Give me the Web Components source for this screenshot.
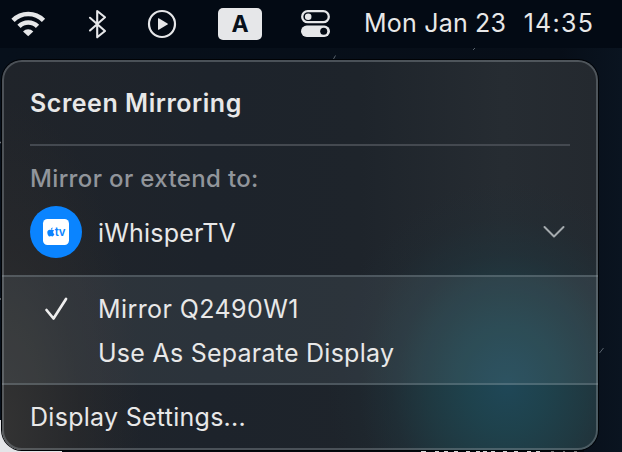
<!DOCTYPE html>
<html lang="en">
<head>
<meta charset="utf-8">
<title>Screen Mirroring</title>
<style>
html,body{margin:0;height:100%;overflow:hidden}
body{font-family:Inter,"Liberation Sans",sans-serif;color:#e8e8e8;background:#050b15}
</style>
</head>
<body>
<mac-desktop>
  <menu-bar slot="bar"></menu-bar>
  <mirror-panel>
    <panel-head slot="head">Screen Mirroring</panel-head>
    <device-group slot="device" name="iWhisperTV">Mirror or extend to:</device-group>
    <mode-option slot="modes" checked style="letter-spacing:.41px">Mirror Q2490W1</mode-option>
    <mode-option slot="modes" style="letter-spacing:.25px">Use As Separate Display</mode-option>
    <panel-link slot="foot">Display Settings...</panel-link>
  </mirror-panel>
</mac-desktop>
<script>
const define = (name, html) => customElements.define(name, class extends HTMLElement {
  constructor() {
    super();
    this.attachShadow({mode: 'open'}).innerHTML = html;
  }
  connectedCallback() {
    const n = this.shadowRoot.querySelector('[data-name]');
    if (n) n.textContent = this.getAttribute('name');
  }
});

define('mac-desktop', `<style>
:host{display:flex;flex-direction:column;position:relative;width:622px;height:452px;overflow:hidden;background:linear-gradient(90deg,#07101b 0,#070e18 90%,#0a1420 100%)}
main{padding:12px 24px 2px 2px;position:relative}
.scene{position:absolute;inset:0}
</style>
<svg class="scene" width="622" height="452" aria-hidden="true">
<rect y="420" width="62" height="32" fill="#e4e5e8"/><rect x="62" y="445" width="522" height="7" fill="#04080e"/>
<path d="M0 142.500H2M0 299H2" stroke="#70757b" stroke-width="1.500"/>
<path d="M333.500 59l2-3.500M473 50l2-2M599.500 353l4-5" stroke="#59636d" stroke-width="1" fill="none"/>
<path d="M421 451.500h5M435 451.500h4M444 451.500h4M454 451.500h4M466 451.500h4M476 451.500h4M483 451.500h4M491 451.500h4M503 451.500h4M514 451.500h4M527 451.500h4M536 451.500h4" stroke="#d8d8d8"/>
<path d="M551 451.500h3M563 451.500h2M574 451.500h3" stroke="#777"/>
</svg>
<slot name="bar"></slot><main><slot></slot></main>`);

define('menu-bar', `<style>
:host{display:flex;position:relative;height:48px;background:#030a14;align-items:center;box-sizing:border-box;padding-left:10px}
svg{display:block;flex:none}
.bt{margin-left:42px}.play{margin-left:39px}
.key{margin-left:41px;width:44px;height:32px;border-radius:5px;background:#e6e7e9;color:#07101b;font:700 23px/33px Inter;text-align:center}
.cc{margin-left:39px}
.date{display:flex;margin-left:33px;margin-top:-2px;font-size:25px;line-height:46px}
.d{letter-spacing:.2px}.t{margin-left:17.500px;letter-spacing:1.250px}
</style>
<svg width="36" height="48" viewBox="0 0 36 48" fill="none" stroke="#e6e7e9" stroke-width="4.600"><path d="M3 20.300a21.500 21.500 0 0 1 30.500 0M9 26.300a13 13 0 0 1 18.500 0"/><path d="M13 31.400a7.500 7.500 0 0 1 10.300 0L18.200 36.300Z" fill="#e6e7e9" stroke="none"/></svg>
<svg class="bt" width="20" height="48" viewBox="0 0 20 48" fill="none" stroke="#e6e7e9" stroke-width="2.100" stroke-linejoin="round" stroke-linecap="round"><path d="M2 17.800L17 31L9.200 37.300V11L17 17.300L2 30.500"/></svg>
<svg class="play" width="30" height="48" viewBox="0 0 30 48"><circle cx="15" cy="24" r="13" fill="none" stroke="#e6e7e9" stroke-width="2.200"/><path d="M11 18.700v10.600q0 .8.800.4l8.700-5.100q.7-.6 0-1.200l-8.700-5.100q-.8-.4-.8.400Z" fill="#e6e7e9"/></svg>
<div class="key">A</div>
<svg class="cc" width="30" height="48" viewBox="0 0 30 48"><rect x="1.200" y="11.200" width="26.600" height="11" rx="5.500" fill="none" stroke="#e6e7e9" stroke-width="2.300"/><circle cx="7.200" cy="16.700" r="3.300" fill="#e6e7e9"/><rect y="25.500" width="29" height="11.500" rx="5.750" fill="#e6e7e9"/><circle cx="22.700" cy="31.200" r="3.500" fill="#030a14"/></svg>
<div class="date"><span class="d">Mon Jan 23</span><span class="t">14:35</span></div>`);

define('mirror-panel', `<style>
:host{display:flex;flex-direction:column;box-sizing:border-box;position:relative;width:596px;height:390px;border-radius:20px;overflow:hidden;box-shadow:0 0 0 1px #010306;
background:radial-gradient(ellipse 180px 205px at 505px 325px,#1f4757 0,rgba(30,67,78,.95) 22%,rgba(30,62,71,.75) 44%,rgba(30,54,63,.45) 64%,rgba(30,48,56,.18) 82%,rgba(31,45,55,0) 100%),radial-gradient(ellipse 140px 330px at 0 370px,#333 0,rgba(43,43,44,.6) 55%,rgba(30,34,40,0) 100%),linear-gradient(90deg,#20242a 0,#1d232b 35%,#1e242b 60%,#262c32 84%,#24292f 100%)}
:host::after{content:"";position:absolute;inset:0;border:2px solid rgba(160,170,176,.34);border-radius:20px;pointer-events:none}
.head{height:84px}.line{height:2px;margin:0 28px;background:#444950}
.device{height:129px}
.modes{height:110px;box-sizing:border-box;border-top:2px solid rgba(160,175,182,.28);border-bottom:2px solid rgba(160,175,182,.28);background:rgba(160,180,190,.11);padding-top:10px}
</style>
<div class="head"><slot name="head"></slot></div><div class="line"></div>
<div class="device"><slot name="device"></slot></div>
<div class="modes"><slot name="modes"></slot></div>
<slot name="foot"></slot>`);

define('panel-head', `<style>:host{display:block;padding:2px 28px 0;font-size:25px;font-weight:600;line-height:82px;letter-spacing:.53px}</style><slot></slot>`);

define('device-group', `<style>
:host{display:block;padding:17px 28px 0}
.label{font-size:24px;font-weight:500;line-height:32px;color:#91959b;letter-spacing:.36px}
.row{display:flex;align-items:center;height:52px;margin-top:11px}
.icon{width:52px;height:52px;border-radius:50%;background:#0a84ff;display:flex;align-items:center;justify-content:center}
.box{width:26px;height:26px;border-radius:4.500px;background:#fff;color:#0a84ff;display:flex;align-items:center;justify-content:center;font:600 11.500px/25px Inter;letter-spacing:-.2px}
.name{margin-left:16px;padding-top:2px;font-size:25px;line-height:50px;flex:1;letter-spacing:.2px}
.chev{margin-right:5px}
</style>
<div class="label"><slot></slot></div>
<div class="row"><div class="icon"><div class="box"><svg width="8" height="10" viewBox="0 0 8 10" fill="currentColor"><path d="M4 3C2.500 2.100.3 2.800.3 5.400c0 2 1.300 4 2.300 4 .6 0 .8-.3 1.400-.3s.8.300 1.400.3c.7 0 1.500-1 2-2.200C5.800 6.500 5.700 4.300 7.100 3.600 6.300 2.500 5 2.500 4 3ZM3.900 2.500C3.900 1.300 4.700.6 5.600.4 5.700 1.500 5 2.400 3.900 2.500Z"/></svg>tv</div></div>
<span class="name" data-name></span>
<svg class="chev" width="22" height="14" viewBox="0 0 22 14" fill="none" stroke="#a5abae" stroke-width="2" stroke-linecap="round" stroke-linejoin="round"><path d="M1.500 2L11 11.500L20.500 2"/></svg></div>`);

define('mode-option', `<style>
:host{display:flex;align-items:center;height:44px;font-size:25px;padding-left:42px}
svg{visibility:hidden;width:54px;height:44px;flex:none}
:host([checked]) svg{visibility:visible}
</style>
<svg viewBox="0 0 54 44" fill="none" stroke="#eee" stroke-width="2.700" stroke-linecap="round" stroke-linejoin="round"><path d="M2.500 23L9.500 31.500L22 12"/></svg><span><slot></slot></span>`);

define('panel-link', `<style>:host{display:block;padding:1px 28px 0;font-size:25px;line-height:62px;letter-spacing:.28px}</style><slot></slot>`);
</script>
</body>
</html>
